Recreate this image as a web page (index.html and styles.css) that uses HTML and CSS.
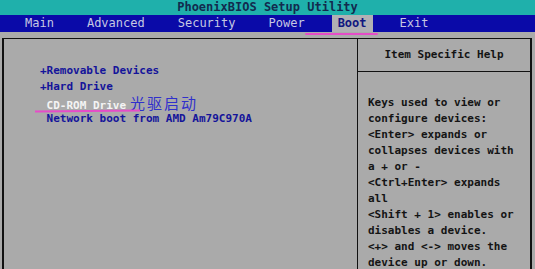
FILE: index.html
```html
<!DOCTYPE html>
<html lang="zh-CN">
<head>
    <meta charset="UTF-8">
    <title>PhoenixBIOS Setup Utility</title>
    <link rel="stylesheet" href="styles.css">
</head>
<body>
    <div class="title">PhoenixBIOS Setup Utility</div>

    <div class="menu">
        <span class="menu-item">Main</span>
        <span class="menu-item">Advanced</span>
        <span class="menu-item">Security</span>
        <span class="menu-item">Power</span>
        <span class="menu-item active">Boot</span>
        <span class="menu-item">Exit</span>
    </div>

    <div class="screen">
        <div class="frame">
            <div class="boot-list">
                <div class="boot-item">+Removable Devices</div>
                <div class="boot-item">+Hard Drive</div>
                <div class="boot-item selected"><span class="sel-text"> CD-ROM Drive</span><span class="note">光驱启动</span></div>
                <div class="boot-item"> Network boot from AMD Am79C970A</div>
            </div>

            <div class="help">
                <div class="help-title">Item Specific Help</div>
                <div class="help-body">
                    <div>Keys used to view or</div>
                    <div>configure devices:</div>
                    <div>&lt;Enter&gt; expands or</div>
                    <div>collapses devices with</div>
                    <div>a + or -</div>
                    <div>&lt;Ctrl+Enter&gt; expands</div>
                    <div>all</div>
                    <div>&lt;Shift + 1&gt; enables or</div>
                    <div>disables a device.</div>
                    <div>&lt;+&gt; and &lt;-&gt; moves the</div>
                    <div>device up or down.</div>
                </div>
            </div>
        </div>
    </div>
</body>
</html>
```

FILE: styles.css
```css
body {
    margin: 0;
    background: #aaaaaa;
    font-family: "DejaVu Sans Mono", "Liberation Mono", monospace;
    font-size: 11px;
    font-weight: bold;
    overflow: hidden;
    height: 269px;
}

.title {
    height: 15px;
    line-height: 15px;
    background: #1fb0ab;
    color: #122a4e;
    text-align: center;
    font-size: 12px;
}

.menu {
    height: 17px;
    line-height: 17px;
    background: #0a0aa8;
    display: flex;
    gap: 21px;
    padding-left: 19px;
    position: relative;
}

.menu-item {
    padding: 0 6px;
    color: #c6c8e2;
    font-size: 12px;
    font-weight: normal;
}

.menu-item.active {
    background: #b0b0b4;
    color: #101880;
    font-weight: bold;
}

/* rotulador rosa bajo "Boot" */
.menu-item.active::after {
    content: "";
    position: absolute;
    left: 305px;
    top: 18px;
    width: 73px;
    height: 2px;
    background: #e64cc8;
    border-radius: 1px;
}

.screen {
    padding: 6px 3px 0 2px;
}

.frame {
    display: grid;
    grid-template-columns: 1fr 173px;
    border-top: 1px solid #111;
    border-left: 2px solid #111;
    border-right: 2px solid #111;
    height: 240px;
}

.boot-list {
    padding: 24px 0 0 36px;
    color: #14149a;
}

.boot-item {
    height: 16px;
    line-height: 16px;
    white-space: pre;
    position: relative;
}

.boot-item.selected .sel-text {
    color: #f4f4f4;
}

.boot-item.selected::after {
    content: "";
    position: absolute;
    left: -5px;
    top: 15px;
    width: 105px;
    height: 2px;
    background: #e64cc8;
    transform: rotate(-0.6deg);
}

.note {
    font-family: "Noto Sans CJK SC", sans-serif;
    font-weight: normal;
    font-size: 15px;
    letter-spacing: 2px;
    color: #3030cc;
    margin-left: 4px;
}

.help {
    border-left: 1px solid #111;
    color: #141414;
}

.help-title {
    height: 32px;
    line-height: 32px;
    text-align: center;
    border-bottom: 1px solid #111;
}

.help-body {
    padding: 23px 0 0 10px;
}

.help-body div {
    height: 16px;
    line-height: 16px;
    white-space: pre;
}
```
